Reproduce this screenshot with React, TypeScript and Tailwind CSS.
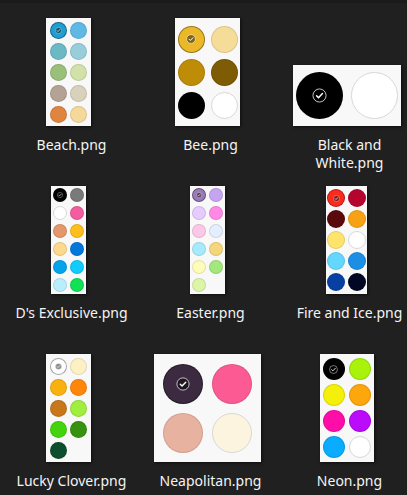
import React from "react";

type Thumb = {
  name: string;
  box: string;
  icon: string;
  colors: string[];
};

// swatch thumbnails, first colour is the selected one
const thumbs: Thumb[] = [
  {
    name: "Beach.png",
    box: "w-[45px] h-[108px] grid-cols-[repeat(2,17px)] auto-rows-[17px] gap-x-[3px] gap-y-[4px]",
    icon: "size-[7px]",
    colors: ["#1e9fd3", "#5fb9e5", "#6bb9c5", "#98cedc", "#99bf7a", "#d2e1a9", "#b4a394", "#dad1bd", "#e0853f", "#f5d99b"],
  },
  {
    name: "Bee.png",
    box: "w-[65px] h-[108px] grid-cols-[repeat(2,27px)] auto-rows-[27px] gap-[6px]",
    icon: "size-[10px]",
    colors: ["#ebb82a", "#f5dc98", "#bf8c08", "#7e5c05", "#000000", "#ffffff"],
  },
  {
    name: "Black and White.png",
    box: "w-[108px] h-[61px] grid-cols-[repeat(2,47px)] auto-rows-[47px] gap-x-[8px]",
    icon: "size-[15px]",
    colors: ["#000000", "#ffffff"],
  },
  {
    name: "D's Exclusive.png",
    box: "w-[35px] h-[108px] grid-cols-[repeat(2,14px)] auto-rows-[14px] gap-x-[3px] gap-y-[4px]",
    icon: "size-[6px]",
    colors: ["#000000", "#7a7a7a", "#ffffff", "#f35c9f", "#e4976a", "#fdbf1d", "#fcd98c", "#0278dc", "#05a4ea", "#10cdfd", "#b9effd", "#10e155"],
  },
  {
    name: "Easter.png",
    box: "w-[35px] h-[108px] grid-cols-[repeat(2,14px)] auto-rows-[14px] gap-x-[3px] gap-y-[4px]",
    icon: "size-[6px]",
    colors: ["#9a7bb8", "#c5a4f0", "#e6cbff", "#ff8ae6", "#fdc8e6", "#e3eefe", "#a6ebfd", "#f5d67a", "#fefcb9", "#a2e87d", "#ddf5a6"],
  },
  {
    name: "Fire and Ice.png",
    box: "w-[41px] h-[108px] grid-cols-[repeat(2,18px)] auto-rows-[18px] gap-[3px]",
    icon: "size-[7px]",
    colors: ["#fd2a1c", "#b5052e", "#5a0a0c", "#f7a115", "#fee36c", "#ffffff", "#63d7fe", "#1c8ee4", "#0640a3", "#020724"],
  },
  {
    name: "Lucky Clover.png",
    box: "w-[45px] h-[108px] grid-cols-[repeat(2,17px)] auto-rows-[17px] gap-x-[3px] gap-y-[4px]",
    icon: "size-[7px]",
    colors: ["#ffffff", "#fdf1c3", "#f9b10f", "#fe870b", "#c8771b", "#a0ee3d", "#44d40e", "#37920f", "#0c4e2d"],
  },
  {
    name: "Neapolitan.png",
    box: "w-[107px] h-[108px] grid-cols-[repeat(2,40px)] auto-rows-[40px] gap-[9px]",
    icon: "size-[14px]",
    colors: ["#3b2a40", "#fb5b92", "#e8b2a1", "#fdf4e0"],
  },
  {
    name: "Neon.png",
    box: "w-[54px] h-[108px] grid-cols-[repeat(2,22px)] auto-rows-[22px] gap-x-[4px] gap-y-[4px]",
    icon: "size-[9px]",
    colors: ["#000000", "#a8f20c", "#f4f009", "#fda70c", "#fe0da9", "#ba0bfb", "#0aacff", "#ffffff"],
  },
];

function CheckMark({ className }: { className: string }) {
  return (
    <svg viewBox="0 0 24 24" className={className}>
      <circle cx="12" cy="12" r="10.5" fill="rgba(0,0,0,0.45)" stroke="rgba(255,255,255,0.75)" strokeWidth="1.6" />
      <path d="M7.3 12.4l3.1 3.1 6.3-6.6" fill="none" stroke="#fff" strokeWidth="2.4" strokeLinecap="round" strokeLinejoin="round" />
    </svg>
  );
}

function Swatch({ color, selected, icon }: { color: string; selected: boolean; icon: string }) {
  const light = color === "#ffffff" || color === "#fdf4e0";
  return (
    <div
      className={`flex h-full w-full items-center justify-center rounded-full border ${
        selected ? "border-black/35" : light ? "border-[#d8d8d8]" : "border-black/10"
      }`}
      style={{ backgroundColor: color }}
    >
      {selected && <CheckMark className={icon} />}
    </div>
  );
}

function Tile({ t }: { t: Thumb }) {
  return (
    <div className="flex flex-col items-center">
      <div className="mr-[6px] flex h-[108px] w-[108px] items-end justify-center">
        <div className={`grid content-center justify-center bg-[#f8f8f8] shadow-[1px_1px_3px_rgba(0,0,0,0.6)] ${t.box}`}>
          {t.colors.map((c, i) => (
            <Swatch key={i} color={c} selected={i === 0} icon={t.icon} />
          ))}
        </div>
      </div>
      <p className="mt-[10px] w-[124px] text-center text-[14px] leading-[18px] text-[#f4f4f4]">{t.name}</p>
    </div>
  );
}

export default function App() {
  return (
    <main className="h-[495px] overflow-hidden bg-[#202020]" style={{ fontFamily: '"Noto Sans", "Open Sans", sans-serif' }}>
      <div className="h-[3px] bg-[#1b1b1b]" />
      <div className="grid grid-cols-[repeat(3,139px)] auto-rows-[168px] pl-[2px] pt-[15px]">
        {thumbs.map((t) => (
          <Tile key={t.name} t={t} />
        ))}
      </div>
    </main>
  );
}
